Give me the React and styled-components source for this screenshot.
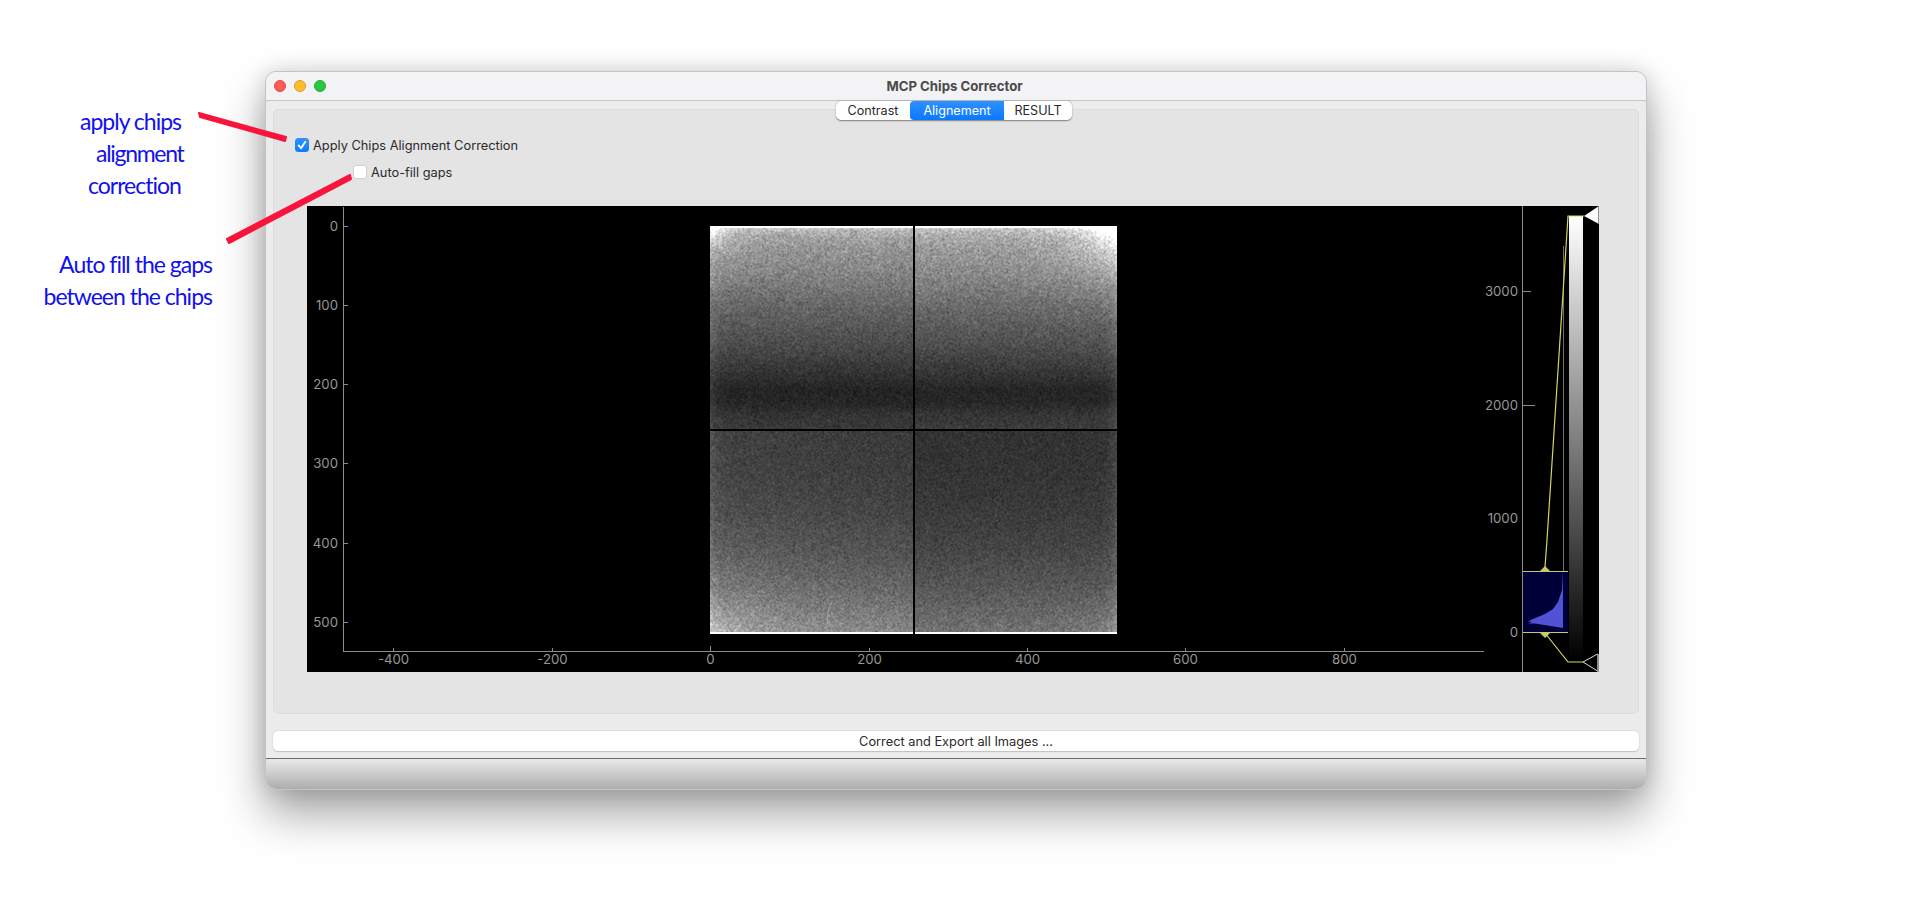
import React, { useEffect, useRef } from "react";
import styled, { createGlobalStyle } from "styled-components";

const IMG_W = 407;
const IMG_H = 408;

const GlobalStyle = createGlobalStyle`
  * {
    box-sizing: border-box;
  }
  body {
    margin: 0;
    background: #ffffff;
    font-family: "Inter", "Liberation Sans", sans-serif;
    overflow: hidden;
  }
`;

const makeRandom = (seed) => {
  let s = seed;
  return () => {
    s = (s + 0x6d2b79f5) | 0;
    let t = Math.imul(s ^ (s >>> 15), 1 | s);
    t = (t + Math.imul(t ^ (t >>> 7), 61 | t)) ^ t;
    return ((t ^ (t >>> 14)) >>> 0) / 4294967296;
  };
};

// brightness of the detector image from top to bottom
const profile = [
  [0, 165], [0.05, 150], [0.12, 130], [0.2, 100], [0.3, 72], [0.36, 50], [0.4, 36],
  [0.43, 37], [0.46, 50], [0.5, 58], [0.6, 60], [0.7, 68], [0.8, 82], [0.9, 105], [1, 135],
];

const baseAt = (t) => {
  for (let i = 1; i < profile.length; i++) {
    if (t <= profile[i][0]) {
      const [t0, v0] = profile[i - 1];
      const [t1, v1] = profile[i];
      return v0 + ((v1 - v0) * (t - t0)) / (t1 - t0);
    }
  }
  return 135;
};

const paintChips = (canvas) => {
  const ctx = canvas.getContext("2d");
  const img = ctx.createImageData(IMG_W, IMG_H);
  const rand = makeRandom(42);

  // grain field, softened a little like a resampled detector image
  const nw = IMG_W + 1;
  const grain = new Float32Array(nw * (IMG_H + 1));
  for (let i = 0; i < grain.length; i++) {
    grain[i] = (rand() + rand() + rand() - 1.5) / 0.5;
  }

  for (let y = 0; y < IMG_H; y++) {
    for (let x = 0; x < IMG_W; x++) {
      const u = x / IMG_W;
      const t = y / IMG_H;
      let v = baseAt(t);
      if (u > 0.5) v *= t > 0.5 ? 0.86 : 1.04;
      else if (t > 0.5) v *= 1 + 0.12 * (1 - u * 2);
      const edgeDist = Math.min(x, IMG_W - 1 - x) / IMG_W;
      v += 20 * Math.exp(-edgeDist / 0.015);
      const tl = Math.hypot(u, t);
      const tr = Math.hypot(1 - u, t);
      const bl = Math.hypot(u, 1 - t);
      const br = Math.hypot(1 - u, 1 - t);
      v += 90 * Math.exp(-tl / 0.04) + 130 * Math.exp(-tr / 0.07);
      v += 45 * Math.exp(-bl / 0.08) + 25 * Math.exp(-br / 0.05);
      v += 50 * Math.exp(-y / 5);
      const g =
        (grain[y * nw + x] + grain[y * nw + x + 1] + grain[(y + 1) * nw + x] + grain[(y + 1) * nw + x + 1]) / 2;
      v += g * (2.5 + v * 0.055);
      if (y < 2 || y >= IMG_H - 2) v = 255;
      if ((x >= 203 && x <= 204) || (y >= 203 && y <= 204)) v = 0;
      const i = (y * IMG_W + x) * 4;
      img.data[i] = img.data[i + 1] = img.data[i + 2] = Math.max(0, Math.min(255, v));
      img.data[i + 3] = 255;
    }
  }
  ctx.putImageData(img, 0, 0);
  // small scratch on the lower left chip
  ctx.strokeStyle = "rgba(190,190,190,0.7)";
  ctx.beginPath();
  ctx.moveTo(122, 376);
  ctx.quadraticCurveTo(116, 385, 118, 398);
  ctx.stroke();
};

const ChipsImage = () => {
  const ref = useRef(null);
  useEffect(() => {
    paintChips(ref.current);
  }, []);
  return <ChipsCanvas ref={ref} width={IMG_W} height={IMG_H} />;
};

const xTicks = [
  { x: 86, label: "-400" },
  { x: 245, label: "-200" },
  { x: 403, label: "0", long: true },
  { x: 562, label: "200" },
  { x: 720, label: "400" },
  { x: 878, label: "600" },
  { x: 1037, label: "800" },
];

const yTicks = [
  { y: 20, label: "0" },
  { y: 99, label: "100" },
  { y: 178, label: "200" },
  { y: 257, label: "300" },
  { y: 337, label: "400" },
  { y: 416, label: "500" },
];

const levelTicks = [
  { y: 85, label: "3000", w: 8 },
  { y: 199, label: "2000", w: 12 },
  { y: 312, label: "1000", w: 0 },
  { y: 426, label: "0", w: 0 },
];

const PlotDrawing = () => (
  <PlotSvg width="1292" height="466" viewBox="0 0 1292 466">
    <defs>
      <linearGradient id="levels" x1="0" y1="0" x2="0" y2="1">
        <stop offset="0" stopColor="#ffffff" />
        <stop offset="1" stopColor="#000000" />
      </linearGradient>
    </defs>

    {/* image axes */}
    <line x1="36.5" y1="1" x2="36.5" y2="445.5" stroke="#8c8c8c" />
    <line x1="36" y1="445.5" x2="1177" y2="445.5" stroke="#8c8c8c" />
    {xTicks.map((t) => (
      <g key={t.label}>
        <line x1={t.x + 0.5} y1={t.long ? 440 : 442} x2={t.x + 0.5} y2="445" stroke="#8c8c8c" />
        <AxisText x={t.x + 0.5} y="458" textAnchor="middle">{t.label}</AxisText>
      </g>
    ))}
    {yTicks.map((t) => (
      <g key={t.label}>
        <line x1="37" y1={t.y + 0.5} x2="41" y2={t.y + 0.5} stroke="#8c8c8c" />
        <AxisText x="31" y={t.y + 5} textAnchor="end">{t.label}</AxisText>
      </g>
    ))}

    {/* levels axis */}
    <line x1="1215.5" y1="0" x2="1215.5" y2="466" stroke="#8c8c8c" />
    {levelTicks.map((t) => (
      <g key={t.label}>
        {t.w > 0 && <line x1="1216" y1={t.y + 0.5} x2={1216 + t.w} y2={t.y + 0.5} stroke="#8c8c8c" />}
        <AxisText x="1211" y={t.y + 5} textAnchor="end">{t.label}</AxisText>
      </g>
    ))}

    {/* gradient bar */}
    <rect x="1262" y="10" width="14" height="444" fill="url(#levels)" />

    {/* histogram */}
    <rect x="1216" y="365" width="45" height="61" fill="#000038" />
    <line x1="1256.5" y1="40" x2="1256.5" y2="365" stroke="#6e6e6e" />
    <polygon
      points="1256,366 1255,384 1251,396 1246,403 1238,408 1226,413 1221,415.5 1225,416 1221,417.5 1228,417.5 1256,422"
      fill="#5252d6"
    />
    <line x1="1216" y1="365.5" x2="1261" y2="365.5" stroke="#c8c86a" />
    <line x1="1216" y1="426.5" x2="1261" y2="426.5" stroke="#c8c86a" />
    <polygon points="1233,365 1238,360 1243,365" fill="#c8c86a" />
    <polygon points="1233,427 1238,432 1243,427" fill="#c8c86a" />

    {/* level curve */}
    <polyline points="1238,361 1240,334 1261,10 1277,10" fill="none" stroke="#d6d65c" strokeWidth="1.2" />
    <polyline points="1238,427 1261,456 1276,456" fill="none" stroke="#d6d65c" strokeWidth="1.2" />

    {/* level handles */}
    <polygon points="1277,10 1292,0 1292,18" fill="#ffffff" />
    <polygon points="1276,456 1290.5,448 1290.5,465" fill="none" stroke="#dddddd" />
    <rect x="1290" y="448" width="2" height="18" fill="#8e8e8e" />
    <rect x="1291" y="0" width="1" height="18" fill="#8e8e8e" />
  </PlotSvg>
);

const CheckMark = () => (
  <svg width="10" height="10" viewBox="0 0 10 10">
    <path d="M1.6 5.4 L4 8.2 L8.4 1.8" fill="none" stroke="#ffffff" strokeWidth="1.9" strokeLinecap="round" strokeLinejoin="round" />
  </svg>
);

const Callouts = () => (
  <CalloutSvg width="420" height="260" viewBox="0 0 420 260">
    <path d="M199 113 L286 137 L285 141 L200 117 Z" fill="#f9143c" stroke="#f9143c" strokeWidth="2" strokeLinejoin="round" />
    <path d="M350 175 L227 239 L229 243 L351 179 Z" fill="#f9143c" stroke="#f9143c" strokeWidth="2" strokeLinejoin="round" />
  </CalloutSvg>
);

const App = () => {
  return (
    <Page>
      <GlobalStyle />
      <Callouts />
      <Note $left={80} $top={107}>apply chips</Note>
      <Note $left={96} $top={139} $tight>alignment</Note>
      <Note $left={88} $top={171}>correction</Note>
      <Note $right={1700} $top={250}>Auto fill the gaps</Note>
      <Note $right={1700} $top={282}>between the chips</Note>

      <Window>
        <TitleBar>
          <Lights>
            <Light $color="#fc5b57" $edge="#df4640" />
            <Light $color="#fdbb2e" $edge="#dd9e24" />
            <Light $color="#27c840" $edge="#1eaa30" />
          </Lights>
          <Title>MCP Chips Corrector</Title>
        </TitleBar>

        <Main>
          <Tabs>
            <Tab $w={74}>Contrast</Tab>
            <Tab $w={94} $active>Alignement</Tab>
            <Tab $w={68}>RESULT</Tab>
          </Tabs>

          <GroupBox>
            <CheckRow>
              <CheckBox $checked><CheckMark /></CheckBox>
              Apply Chips Alignment Correction
            </CheckRow>
            <CheckRow $indent>
              <CheckBox />
              Auto-fill gaps
            </CheckRow>
            <Plot>
              <PlotDrawing />
              <ChipsImage />
            </Plot>
          </GroupBox>

          <ExportButton>Correct and Export all Images ...</ExportButton>
        </Main>

        <Footer />
      </Window>
    </Page>
  );
};

export default App;

const Page = styled.div`
  position: relative;
  width: 1912px;
  height: 897px;
  padding: 71px 0 0 265px;
  background: #ffffff;
  overflow: hidden;
`;

const CalloutSvg = styled.svg`
  position: absolute;
  left: 0;
  top: 0;
  z-index: 3;
`;

const Note = styled.div`
  position: absolute;
  top: ${(p) => p.$top}px;
  ${(p) => (p.$left !== undefined ? `left: ${p.$left}px;` : "")}
  ${(p) => (p.$right !== undefined ? `right: ${p.$right}px;` : "")}
  font-family: "Lato", "Open Sans", sans-serif;
  font-size: 23px;
  line-height: 28px;
  letter-spacing: ${(p) => (p.$tight ? "-1.3px" : "-1px")};
  color: #1010f0;
  white-space: nowrap;
`;

const Window = styled.div`
  display: flex;
  flex-direction: column;
  width: 1382px;
  height: 719px;
  border: 1px solid #c4c4c4;
  border-radius: 11px;
  background: #ececec;
  overflow: hidden;
  box-shadow: 0 24px 46px rgba(0, 0, 0, 0.36), 0 0 22px rgba(0, 0, 0, 0.14);
`;

const TitleBar = styled.div`
  position: relative;
  display: flex;
  align-items: center;
  justify-content: center;
  flex: 0 0 29px;
  background: #f3f3f5;
  border-bottom: 1px solid #c8c8c8;
`;

const Lights = styled.div`
  position: absolute;
  left: 8px;
  top: 8px;
  display: flex;
  gap: 8px;
`;

const Light = styled.span`
  width: 12px;
  height: 12px;
  border-radius: 50%;
  background: ${(p) => p.$color};
  border: 0.5px solid ${(p) => p.$edge};
`;

const Title = styled.div`
  font-size: 13.2px;
  font-weight: 700;
  color: #4a4a4a;
  margin-right: 3px;
`;

const Main = styled.div`
  position: relative;
  flex: 1;
  display: flex;
  flex-direction: column;
  padding: 0 7px 7px;
`;

const Tabs = styled.div`
  position: absolute;
  left: 570px;
  top: 0;
  z-index: 2;
  display: flex;
  height: 19px;
  background: #ffffff;
  border-radius: 5px;
  box-shadow: 0 0.5px 1.5px rgba(0, 0, 0, 0.45);
  overflow: hidden;
`;

const Tab = styled.div`
  display: flex;
  align-items: center;
  justify-content: center;
  width: ${(p) => p.$w}px;
  font-size: 12.6px;
  color: ${(p) => (p.$active ? "#ffffff" : "#2a2a2a")};
  background: ${(p) => (p.$active ? "linear-gradient(#2f90ff, #0a78ff)" : "transparent")};
  border-radius: ${(p) => (p.$active ? "4px 0 0 4px" : "0")};
`;

const GroupBox = styled.div`
  flex: 1;
  display: flex;
  flex-direction: column;
  margin-top: 8px;
  padding: 26px 0 0 21px;
  background: #e4e4e4;
  border: 1px solid #dcdcdc;
  border-radius: 5px;
`;

const CheckRow = styled.label`
  display: flex;
  align-items: center;
  gap: 4px;
  height: 18px;
  margin-left: ${(p) => (p.$indent ? "58px" : "0")};
  margin-top: ${(p) => (p.$indent ? "9px" : "0")};
  font-size: 12.8px;
  color: #2b2b2b;
`;

const CheckBox = styled.span`
  display: flex;
  align-items: center;
  justify-content: center;
  width: 14px;
  height: 14px;
  border-radius: 3.5px;
  background: ${(p) => (p.$checked ? "linear-gradient(#2f90ff, #0f7bfa)" : "#ffffff")};
  border: ${(p) => (p.$checked ? "none" : "1px solid #cfcfcf")};
`;

const Plot = styled.div`
  position: relative;
  width: 1292px;
  height: 466px;
  margin: 25px 0 0 12px;
  background: #000000;
`;

const PlotSvg = styled.svg`
  display: block;
`;

const AxisText = styled.text`
  font-family: "Inter", "Liberation Sans", sans-serif;
  font-size: 13.2px;
  fill: #979797;
`;

const ChipsCanvas = styled.canvas`
  position: absolute;
  left: 403px;
  top: 20px;
  width: ${IMG_W}px;
  height: ${IMG_H}px;
`;

const ExportButton = styled.div`
  display: flex;
  align-items: center;
  justify-content: center;
  flex: 0 0 20px;
  margin-top: 17px;
  font-size: 12.8px;
  color: #2a2a2a;
  background: #ffffff;
  border-radius: 5px;
  box-shadow: 0 0 0 0.5px #dadada, 0 0.5px 1px rgba(0, 0, 0, 0.3);
`;

const Footer = styled.div`
  flex: 0 0 31px;
  border-top: 1px solid #6a6a6a;
  background: linear-gradient(#e9e9e9, #adadad);
`;
